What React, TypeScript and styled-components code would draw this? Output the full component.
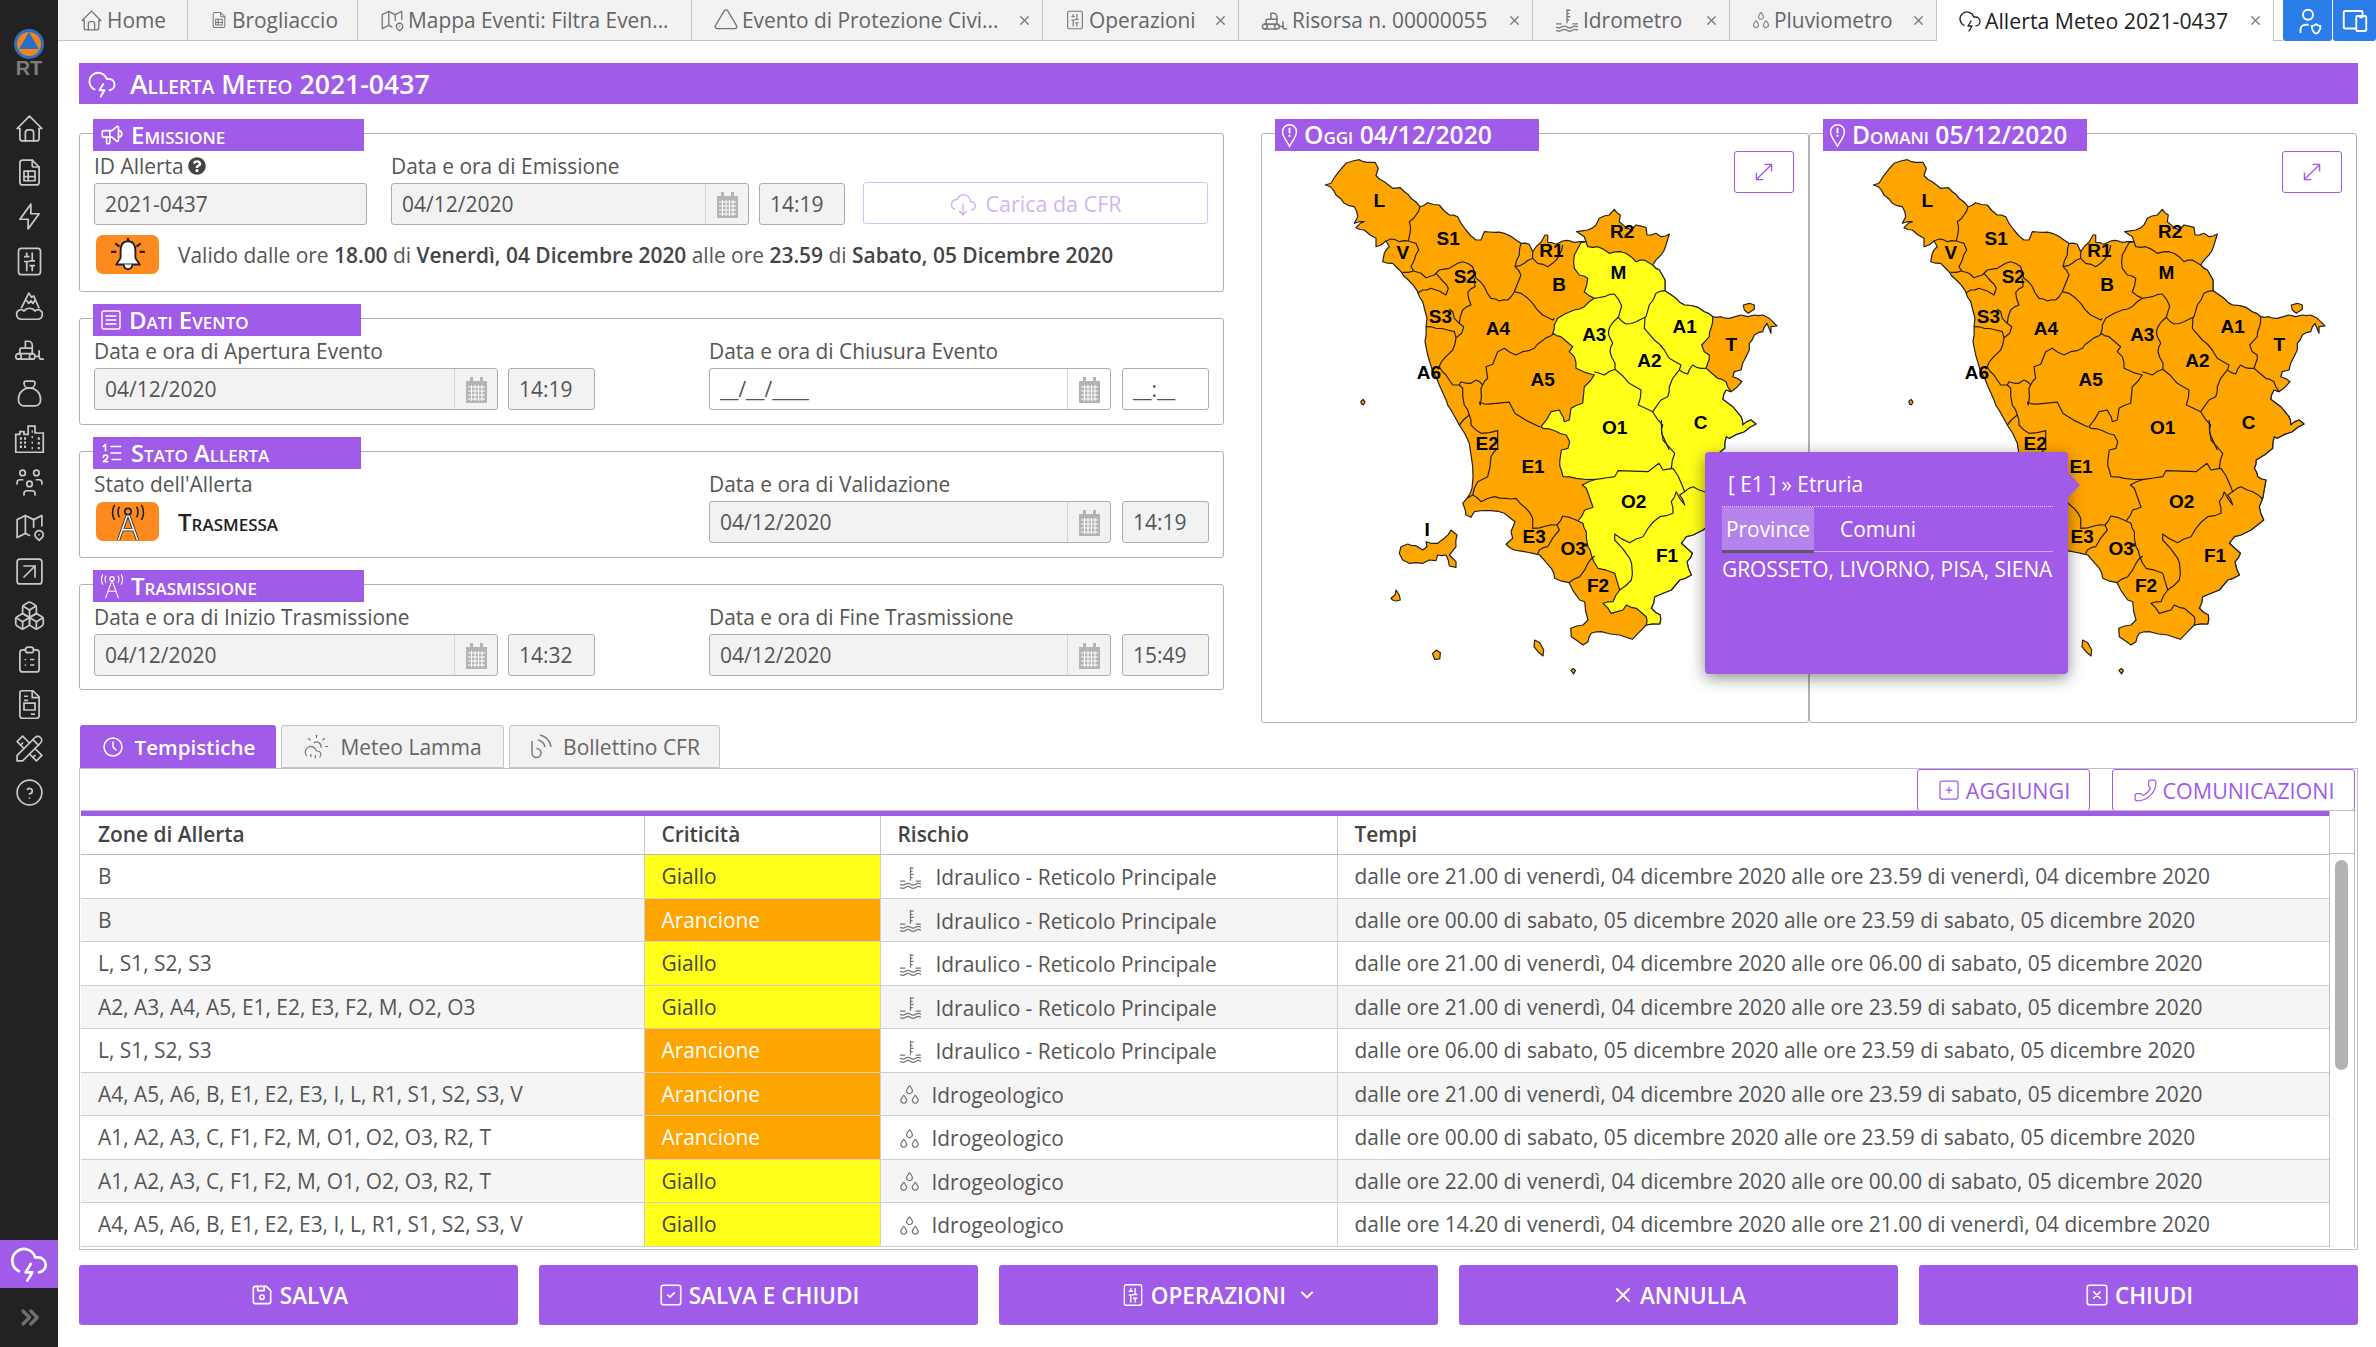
import React from 'react';
import styled, { createGlobalStyle } from 'styled-components';
import {
  TbHome, TbFileSpreadsheet, TbBolt, TbBulldozer, TbMoneybag, TbUsersGroup, TbMap2,
  TbClipboardList, TbTools, TbHelpCircle, TbChevronsRight, TbTriangle, TbDroplets,
  TbUserShield, TbDevices, TbSpeakerphone, TbListNumbers, TbClock, TbSquarePlus,
  TbDeviceFloppy, TbSquareCheck, TbChevronDown, TbX, TbSquareX, TbCloudDownload,
} from 'react-icons/tb';
import { FaQuestionCircle } from 'react-icons/fa';
import { CloudLightning, MoveDiagonal, CloudSunRain, SquareMenu, SquareArrowUpRight, Boxes, Phone } from 'lucide-react';

const PURPLE = '#a05ce8';
const FONT = '"Open Sans", "Noto Sans", sans-serif';

const Global = createGlobalStyle`
  html, body { margin: 0; padding: 0; background: #fff; }
  body { font-family: ${FONT}; font-size: 21px; color: #444; }
  * { box-sizing: border-box; }
`;

/* ---------------- map geometry (traced, in page pixel units) ---------------- */
type Pt = [number, number];
const conv = (ox: number, oy: number, k: number) => (s: string): Pt[] =>
  s.trim().split(/\s+/).map((p) => {
    const [x, y] = p.split(',').map(Number);
    return [ox + x / k, oy + y / k] as Pt;
  });
const A = conv(1320, 155, 3);
const B = conv(1540, 200, 3);
const C = conv(1390, 400, 3);
const D = conv(1532, 420, 3);
const Z = conv(1250, 140, 2.613);

const rough = (pts: Pt[]): string => {
  const out: string[] = [];
  pts.forEach((p, i) => {
    out.push(`${p[0].toFixed(1)},${p[1].toFixed(1)}`);
    const n = pts[i + 1];
    if (!n) return;
    const dx = n[0] - p[0];
    const dy = n[1] - p[1];
    const len = Math.hypot(dx, dy);
    if (len < 8) return;
    const h = Math.abs(Math.round((p[0] + n[0]) * 7 + (p[1] + n[1]) * 13)) % 3;
    const off = (h - 1) * 0.7;
    const mx = (p[0] + n[0]) / 2 - (dy / len) * off;
    const my = (p[1] + n[1]) / 2 + (dx / len) * off;
    out.push(`${mx.toFixed(1)},${my.toFixed(1)}`);
  });
  return out.join(' ');
};

const coastEast = '580,50 575,85 525,120 520,145 530,170 555,180 545,235 535,260 548,300 510,330 480,345 460,350 445,370 478,400 462,425 475,465 440,480 415,510 365,530 355,565 382,585 380,612 340,615';
const eastTail = '355,210 372,240 372,272 405,295 430,315 470,322 490,335 515,350';
const seCoastB = '570,575 555,570 545,598 575,620 600,650 605,675 630,660 645,672 610,695 565,715';

const LAND: Pt[] = [
  ...A('13,90 30,85 42,65 60,42 75,25 95,18 115,14 140,22 162,22 172,40 165,62 190,80 215,100 238,98 252,112 270,130 297,155 320,143 355,150 385,180 410,185 435,225 465,255 480,255 490,230 520,232 550,235 585,255 600,265 625,268 635,290 660,262 672,240 680,240 680,262 705,268 725,258 750,258'),
  ...B(`90,125 115,125 135,125 130,110 107,95 140,90 165,75 175,55 205,45 220,28 238,45 235,65 270,90 285,75 315,82 318,105 345,100 360,110 385,102 375,135 360,165 335,195 ${eastTail} 540,350 565,355 600,345 620,350 640,345 665,345 685,355 708,378 690,380 690,400 678,370 665,395 640,405 625,430 625,450 605,490 600,510 580,515 575,530 603,545 ${seCoastB}`),
  ...D(`${coastEast} 298,658 260,645 205,635 175,640 165,665 150,675 115,650 113,625 150,615 165,600 155,545 140,540 108,488 65,475 55,445 20,405 0,400`),
  ...C('400,455 370,450 345,433 365,415 360,395 372,365 340,340 300,332 250,335 240,352 225,345 215,310 228,295 243,265 245,200 235,130 205,75 180,30 165,0'),
  ...A('355,690 335,650 320,600 312,560 315,515 318,490 305,440 290,410 262,375 240,350 215,325 185,320 190,295 205,275 195,258 180,270 165,275 165,250 130,225 105,218 118,205 130,200 115,200 100,205 110,185 100,155 70,145 45,120 28,95'),
];

const YELLOW: Pt[] = [
  ...B(`120,128 135,125 140,140 170,140 205,160 240,155 270,170 285,185 310,180 335,195 ${eastTail} 510,385 505,410 482,435 490,455 505,465 500,490 495,505 530,535 555,545 ${seCoastB}`),
  ...D(`${coastEast} 340,590 310,565 280,555 270,570 235,580 210,550 240,545 260,510 245,460 195,445 175,405 165,380 160,335 150,310 135,303 155,270 180,262 160,205 148,195 190,178 130,175 90,170 85,150 80,125 85,90 105,85 110,65 100,45 65,32 30,25`),
  ...C('450,80 480,35 505,30'),
  ...B('60,640 70,665 85,660 90,625 125,610 130,560 160,525 105,505 100,470 85,455 95,440 60,410 35,400 40,375 50,355 100,330 130,320 160,295 130,275 140,235 115,225 100,205 100,165'),
];

const ISLANDS: Pt[][] = [
  C('30,440 50,432 75,437 95,450 108,440 105,425 120,430 140,430 160,415 180,390 198,405 195,440 175,465 195,485 195,502 175,498 165,465 140,465 135,482 115,480 95,490 55,490 35,480 25,460'),
  B('607,315 625,310 640,315 640,328 622,340 610,330'),
  C('0,595 12,585 15,570 25,585 28,600 15,603 5,600'),
  D('5,660 20,668 32,690 30,708 15,695 3,680'),
  Z('287,683 293,678 298,684 294,692 289,690'),
  Z('474,1342 484,1333 495,1340 493,1356 480,1357'),
  Z('836,1386 842,1381 848,1386 843,1395'),
];

const LINES: Pt[][] = [
  A('297,155 285,180 265,200 268,230 262,258'),
  A('195,258 210,252 235,260 262,258 285,265 293,285 280,315 270,335 278,348 262,352 245,352'),
  A('278,348 300,355 315,368 340,360 355,345 385,340 410,325 425,320 455,335 465,370 490,395 510,430 535,438 560,435 580,410 600,360 582,335 595,300 600,265'),
  A('345,355 365,378 382,400 375,420 355,408 330,400 305,405 290,415'),
  A('460,370 462,395 440,412 450,450 425,465 415,505 428,515 422,535 405,548 400,530 380,525 345,520 315,515'),
  A('385,462 395,470 400,490 415,505'),
  A('405,548 395,585 370,610 355,635 375,660 395,690 415,690 420,680 450,685 465,675 485,690 500,670 495,635 515,628 530,590 550,580 585,600 605,590 640,580 660,560 690,542 700,535'),
  A('355,635 340,640'),
  A('580,410 600,415 635,445 665,480 695,495 700,490'),
  A('582,335 610,325 635,310 650,325 680,335 695,325 715,300 725,270'),
  A('635,290 635,310'),
  [...A('415,690 425,700 430,750'), ...C('235,45')],
  [...A('485,690 480,700 478,750'), ...Z('597,685 620,690 675,685 690,715 755,750')],
  C('205,75 235,45 240,75 270,100 320,92 320,145 300,170 290,230 260,245 245,285 228,295'),
  C('245,285 270,305 310,290 345,295 375,295 405,325 425,355 425,385 465,378 498,375 505,390 470,440 445,450 440,462'),
  C('498,375 515,348 560,362'),
  D('108,488 140,470 165,430 185,408'),
  B('160,295 190,290 220,282 242,318 232,352 255,372 285,365 315,350 325,315 345,280 372,272'),
  B('232,352 207,380 203,405 215,430 207,455 222,490 222,508 190,525 160,515'),
  B('222,508 265,550 300,570 292,615 335,635 365,675 362,700 385,750'),
  B('312,352 310,385 340,420 370,450 385,475 420,495 415,510 395,535 385,560 380,590 360,600 335,635'),
  B('415,510 440,522 455,495 480,505 495,505'),
  D('385,0 390,60 425,100 415,145'),
  D('190,178 245,170 255,152 345,155 378,130 390,150 420,145 445,190 455,215 480,200 515,215 545,238'),
  D('430,215 415,245 420,280 380,290 345,325 330,350 290,368 245,342 245,360 290,415 297,445 295,480 260,510'),
  D('430,215 455,255 440,225 455,215'),
];

const LABELS: [string, number, number][] = ([
  ['L', 335, 158], ['S1', 515, 258], ['V', 397, 295], ['S2', 560, 357], ['R1', 785, 288], ['R2', 970, 238],
  ['M', 960, 345], ['B', 805, 378], ['S3', 495, 462], ['A3', 897, 507], ['A4', 645, 493], ['A1', 1133, 488],
  ['T', 1255, 535], ['A2', 1041, 575], ['A6', 465, 608], ['A5', 762, 625], ['C', 1175, 738], ['O1', 950, 752],
  ['E2', 617, 792], ['E1', 737, 852], ['O2', 1000, 945], ['E3', 740, 1035], ['O3', 842, 1068], ['F1', 1087, 1085],
  ['F2', 907, 1165], ['I', 460, 1017],
] as [string, number, number][]).map(([t, x, y]) => [t, 1250 + x / 2.613, 140 + y / 2.613]);

const MapSvg = styled.svg`
  display: block;
  width: 480px;
  height: 540px;
  margin: 8px 0 0 35px;
`;
const MapLabel = styled.text`
  font-family: "Liberation Sans", Arial, sans-serif;
  font-weight: 700;
  font-size: 19px;
  fill: #000;
  text-anchor: middle;
  dominant-baseline: central;
`;

const TuscanyMap = ({ inland }: { inland: string }) => (
  <MapSvg viewBox="1310 150 480 540">
    <g stroke="#222" strokeWidth="1.2" strokeLinejoin="round" fill="#ffa500">
      <polygon points={rough([...LAND, LAND[0]])} />
      {ISLANDS.map((p, i) => <polygon key={i} points={rough(p)} />)}
      <polygon points={rough(YELLOW)} fill={inland} />
      {LINES.map((p, i) => <polyline key={i} points={rough(p)} fill="none" />)}
      <circle cx={1585} cy={545} r={1.2} fill="#222" />
    </g>
    {LABELS.map(([t, x, y]) => <MapLabel key={t} x={x} y={y}>{t}</MapLabel>)}
  </MapSvg>
);

/* ---------------- hand drawn icons ---------------- */
const CalendarIcon = () => (
  <svg width="21" height="27" viewBox="0 0 21 27">
    <path d="M0 5h4V1h3v4h7V1h3v4h4v22H0z" fill="#b4b4b4" />
    <path d="M2 11h17M2 15h17M2 19h17M2 23h17M5.500 9v16M9 9v16M12.500 9v16M16 9v16" stroke="#fff" strokeWidth="1" fill="none" />
  </svg>
);
const SliderBox = ({ size = 26, color = '#777' }: { size?: number; color?: string }) => (
  <svg width={size} height={size} viewBox="0 0 24 24" fill="none" stroke={color} strokeWidth="1.25">
    <rect x="4" y="2.500" width="16" height="19" rx="2" />
    <path d="M10 5.500v3M10 12v7M14 5.500v6M14 15v4M8 8.500h4M12 11.500h4M8 12h4M12 15h4" />
  </svg>
);
type GlyphProps = { size?: number; strokeWidth?: number };
const MountainCloud = ({ size = 33, strokeWidth = 1.25 }: GlyphProps) => (
  <svg width={size} height={size} viewBox="0 0 24 24" fill="none" stroke="currentColor" strokeWidth={strokeWidth} strokeLinejoin="round">
    <path d="M6 14L11.500 3l2 3 1.500-1 4 9" />
    <path d="M9.500 8l2 2.500 1.500-2 1.500 2 1.500-2.500" />
    <path d="M6 22a3.500 3.500 0 0 1-1-6.800c1.300-.4 2.300.1 3 .9 1-1.500 2.400-2.100 4-2.100s3 .6 4 2.100c.7-.8 1.700-1.300 3-.9a3.500 3.500 0 0 1-1 6.800z" />
  </svg>
);
const Buildings = ({ size = 33, strokeWidth = 1.25 }: GlyphProps) => (
  <svg width={size} height={size} viewBox="0 0 24 24" fill="none" stroke="currentColor" strokeWidth={strokeWidth}>
    <path d="M2 22V9h3V7h3v2h3V3h5v5h6v14z" />
    <path d="M5 12h1.500M8 12h1.500M5 15h1.500M8 15h1.500M5 18h1.500M8 18h1.500M13.500 7h1M13.500 11h1M13.500 15h1M13.500 19h1M18 12h1.500M18 15.500h1.500M18 19h1.500" strokeWidth={1.8} />
  </svg>
);
const ReportDoc = ({ size = 33, strokeWidth = 1.25 }: GlyphProps) => (
  <svg width={size} height={size} viewBox="0 0 24 24" fill="none" stroke="currentColor" strokeWidth={strokeWidth}>
    <path d="M6.500 2h8l4.500 4.500V20a2 2 0 0 1-2 2H7a2 2 0 0 1-2-2V3.500A1.500 1.500 0 0 1 6.500 2z" />
    <path d="M14 2v5h5M8 6h3M8 9h3M8 11h8v5H8zM13 19h3" />
  </svg>
);
const Hydro = ({ size = 26, color = '#777' }: { size?: number; color?: string }) => (
  <svg width={size} height={size} viewBox="0 0 24 24" fill="none" stroke={color} strokeWidth="1.2">
    <path d="M12 2v13M12 3h3M12 6h2M12 9h3M12 12h2" />
    <path d="M2 15.500h5M17 15.500h5M2 18.500c2 1.400 3 1.400 5 0s3-1.400 5 0 3 1.400 5 0 3-1.400 5 0M2 21.500c2 1.400 3 1.400 5 0s3-1.400 5 0 3 1.400 5 0 3-1.400 5 0" />
  </svg>
);
const Bell = () => (
  <svg width="48" height="38" viewBox="0 0 44 36">
    <path d="M22 5c-5 0-7 4-7 9v6c0 3-3 4-4 7h22c-1-3-4-4-4-7v-6c0-5-2-9-7-9z" fill="#fff" stroke="#222" strokeWidth="1.8" />
    <path d="M18 27c0 6 8 6 8 0" fill="#fff" stroke="#222" strokeWidth="1.8" />
    <path d="M22 2v3M10 7l4 3M34 7l-4 3M6 15h5M33 15h5" stroke="#222" strokeWidth="2" fill="none" />
  </svg>
);
const Mast = ({ size = 40, color = '#fff', outline = true }: { size?: number; color?: string; outline?: boolean }) => (
  <svg width={size} height={size} viewBox="0 0 40 40" fill="none">
    {outline && <path d="M20 11L10 39M20 11l10 28M14 28h12M20 11l-6 17M20 11l6 17" stroke="#222" strokeWidth="3.400" />}
    <path d="M20 11L10 39M20 11l10 28M14 28h12" stroke={color} strokeWidth="1.700" />
    <circle cx="20" cy="9" r="3.400" stroke={outline ? '#222' : color} strokeWidth="1.700" />
    <path d="M11 4c-2 3-2 8 0 11M29 4c2 3 2 8 0 11M6 2c-3 5-3 12 0 16M34 2c3 5 3 12 0 16" stroke={outline ? '#222' : color} strokeWidth="1.700" />
  </svg>
);
const Pin = () => (
  <svg width="17" height="27" viewBox="0 0 22 32" fill="none" stroke="#fff" strokeWidth="1.800">
    <path d="M11 30C6 21 2 17 2 11a9 9 0 0 1 18 0c0 6-4 10-9 19z" />
    <path d="M11 6v7M11 15v2.500" strokeWidth="2.400" />
  </svg>
);
const Signal = () => (
  <svg width="24" height="28" viewBox="0 0 24 28" fill="none" stroke="#777" strokeWidth="1.400">
    <path d="M3 8v12a4.500 4.500 0 1 0 4.500-4.500" />
    <path d="M9 7a9 9 0 0 1 7 7M11 2a14 14 0 0 1 11 12" />
  </svg>
);
const Logo = () => (
  <svg width="32" height="34" viewBox="0 0 32 34">
    <circle cx="16" cy="17" r="15" fill="#2a6fc4" />
    <circle cx="16" cy="17" r="12" fill="#f08420" />
    <path d="M16 5l10 17H6z" fill="#2a6fc4" />
  </svg>
);

/* ---------------- shell ---------------- */
const Page = styled.div`
  display: flex;
  width: 2376px;
  height: 1347px;
  overflow: hidden;
`;
const Side = styled.nav`
  flex: 0 0 58px;
  background: #222;
  display: flex;
  flex-direction: column;
  align-items: center;
  color: #c8c8c8;
`;
const LogoBox = styled.div`
  height: 106px;
  padding-top: 27px;
  display: flex;
  flex-direction: column;
  align-items: center;
`;
const LogoText = styled.span`
  font-family: "Liberation Sans", sans-serif;
  font-weight: 700;
  font-size: 20px;
  line-height: 15px;
  color: #7d7d7d;
`;
const SideItem = styled.div`
  height: 44.300px;
  display: flex;
  align-items: center;
  justify-content: center;
`;
const SideActive = styled.div`
  margin-top: auto;
  margin-bottom: 59px;
  width: 100%;
  height: 48px;
  background: ${PURPLE};
  color: #fff;
  display: flex;
  align-items: center;
  justify-content: center;
  position: relative;
`;
const SideMore = styled.div`
  position: absolute;
  top: 62px;
  left: 0;
  width: 100%;
  display: flex;
  justify-content: center;
  color: #6f6f6f;
`;
const Main = styled.main`
  flex: 1;
  min-width: 0;
  display: flex;
  flex-direction: column;
`;
const TabBar = styled.div`
  height: 41px;
  display: flex;
  align-items: stretch;
`;
const Tab = styled.div<{ $w: number; $active?: boolean }>`
  flex: 0 0 ${(p) => p.$w}px;
  display: flex;
  align-items: center;
  padding: 0 10px 0 21px;
  gap: 3px;
  font-size: ${(p) => (p.$active ? 21.3 : 20.9)}px;
  font-weight: ${(p) => (p.$active ? 500 : 400)};
  white-space: nowrap;
  background: ${(p) => (p.$active ? '#fff' : '#f2f2f2')};
  color: ${(p) => (p.$active ? '#222' : '#666')};
  border-right: 1px solid #c4c4c4;
  border-bottom: ${(p) => (p.$active ? 'none' : '1.500px solid #c4c4c4')};
`;
const TabClose = styled.span`
  margin-left: auto;
  display: flex;
  color: #777;
`;
const TabFill = styled.div`
  flex: 0 0 9px;
  border-bottom: 1.500px solid #c4c4c4;
`;
const BlueBtn = styled.div<{ $w: number }>`
  flex: 0 0 ${(p) => p.$w}px;
  background: #2b7de9;
  color: #fff;
  display: flex;
  align-items: center;
  justify-content: center;
  border-radius: 0 0 3px 3px;
  & + & { margin-left: 1px; }
`;
const Content = styled.div`
  flex: 1;
  min-height: 0;
  display: flex;
  flex-direction: column;
  padding: 22px 18px 0 21px;
`;
const TitleBar = styled.h1`
  margin: 0;
  height: 41px;
  background: ${PURPLE};
  color: #fff;
  display: flex;
  align-items: center;
  gap: 13px;
  padding-left: 8px;
  font-size: 26.600px;
  font-weight: 600;
  font-variant: small-caps;
`;
const Upper = styled.div`
  margin-top: 15px;
  display: grid;
  grid-template-columns: 1145px 1fr;
  column-gap: 37px;
  height: 572px;
`;
const LeftCol = styled.div`
  display: flex;
  flex-direction: column;
  gap: 12px;
`;
const RightCol = styled.div`
  display: grid;
  grid-template-columns: 548px 548px;
  position: relative;
  height: 604px;
`;
const Box = styled.fieldset<{ $h: number }>`
  margin: -2px 0 0;
  padding: 0 14px;
  min-width: 0;
  height: ${(p) => p.$h + 2}px;
  border: 1.500px solid #b2b2b2;
  border-radius: 3px;
  position: relative;
`;
const Legend = styled.legend<{ $w: number; $fs?: number }>`
  float: none;
  position: relative;
  top: 2px;
  width: ${(p) => p.$w}px;
  height: 32px;
  margin: 0 0 -7px -1px;
  padding: 0 0 0 6px;
  background: ${PURPLE};
  color: #fff;
  display: flex;
  align-items: center;
  gap: 6px;
  font-size: ${(p) => p.$fs ?? 24}px;
  font-weight: 600;
  font-variant: small-caps;
  line-height: 32px;
  white-space: nowrap;
`;
const Label = styled.label`
  display: flex;
  align-items: center;
  gap: 4px;
  height: 32px;
  margin: 8px 0 1px;
  font-size: 20.900px;
  color: #555;
  white-space: nowrap;
`;
const Row = styled.div`
  display: flex;
  align-items: flex-end;
`;
const Cols = styled.div`
  display: grid;
  grid-template-columns: 615px 1fr;
`;
const Inline = styled.div<{ $gap?: number }>`
  display: flex;
  gap: ${(p) => p.$gap ?? 10}px;
`;
const Field = styled.div<{ $ml?: number }>`
  display: flex;
  flex-direction: column;
  margin-left: ${(p) => p.$ml ?? 0}px;
`;
const Input = styled.div<{ $w: number; $empty?: boolean }>`
  width: ${(p) => p.$w}px;
  height: 42px;
  display: flex;
  align-items: center;
  padding-left: 10px;
  background: ${(p) => (p.$empty ? '#fff' : '#f2f2f2')};
  border: 1.500px solid #aeaeae;
  border-radius: 3px;
  font-size: 21px;
  color: #555;
  white-space: nowrap;
`;
const Addon = styled.span`
  margin-left: auto;
  width: 43px;
  height: 100%;
  display: flex;
  align-items: center;
  justify-content: center;
  border-left: 1px solid #d4d4d4;
`;
const LoadBtn = styled.div`
  width: 345px;
  height: 42px;
  margin: 0 0 1px 18px;
  border: 1.500px solid #d9bff6;
  border-radius: 3px;
  color: #d3b4f6;
  display: flex;
  align-items: center;
  justify-content: center;
  gap: 8px;
  font-size: 21.500px;
  font-weight: 500;
`;
const StatusRow = styled.div<{ $mt: number }>`
  display: flex;
  align-items: center;
  gap: 19px;
  margin-top: ${(p) => p.$mt}px;
  margin-left: 2px;
`;
const StatusIcon = styled.div`
  width: 63px;
  height: 39px;
  background: #fd8a1f;
  border-radius: 7px;
  display: flex;
  align-items: center;
  justify-content: center;
  overflow: hidden;
`;
const Note = styled.div`
  font-size: 20.930px;
  color: #555;
  white-space: nowrap;
  b { font-weight: 600; color: #444; }
`;
const StateName = styled.span`
  font-size: 24px;
  font-weight: 600;
  font-variant: small-caps;
  color: #222;
`;
const ExpandBtn = styled.button<{ $r: number }>`
  position: absolute;
  top: 9px;
  right: ${(p) => p.$r}px;
  width: 60px;
  height: 42px;
  padding: 0;
  background: #fff;
  border: 1.500px solid ${PURPLE};
  border-radius: 3px;
  color: ${PURPLE};
  display: flex;
  align-items: center;
  justify-content: center;
`;
const Tooltip = styled.div`
  position: absolute;
  left: 444px;
  top: 333px;
  width: 363px;
  height: 222px;
  padding: 15px 15px 0 17px;
  background: ${PURPLE};
  border-radius: 4px;
  color: #fff;
  font-size: 20.900px;
  box-shadow: 0 4px 16px rgba(0, 0, 0, 0.45);
  &::after {
    content: '';
    position: absolute;
    right: -12px;
    top: 19px;
    border-style: solid;
    border-width: 14px 0 14px 13px;
    border-color: transparent transparent transparent ${PURPLE};
  }
`;
const TipTitle = styled.div`
  height: 40px;
  line-height: 34px;
  padding-left: 6px;
  border-bottom: 1.500px dotted #e3cffa;
`;
const TipTabs = styled.div`
  display: flex;
  height: 45px;
  border-bottom: 1px solid #cba6f2;
`;
const TipTab = styled.div<{ $on?: boolean }>`
  padding: 0 ${(p) => (p.$on ? 4 : 26)}px;
  width: ${(p) => (p.$on ? '92px' : 'auto')};
  line-height: 44px;
  background: ${(p) => (p.$on ? '#b484ec' : 'transparent')};
  border-bottom: ${(p) => (p.$on ? '3px solid #5f5670' : 'none')};
  height: ${(p) => (p.$on ? '46px' : '44px')};
`;
const TipBody = styled.div`
  margin-top: 1px;
  line-height: 32px;
  white-space: nowrap;
`;
const TabsRow = styled.div`
  margin-top: 34px;
  display: flex;
  gap: 5px;
  padding-left: 1px;
  height: 43px;
`;
const PanelTab = styled.div<{ $w: number; $on?: boolean }>`
  flex: 0 0 ${(p) => p.$w}px;
  display: flex;
  align-items: center;
  justify-content: center;
  gap: 10px;
  border: 1.500px solid ${(p) => (p.$on ? PURPLE : '#c4c4c4')};
  border-bottom: ${(p) => (p.$on ? 'none' : '1.500px solid #c4c4c4')};
  border-radius: 3px 3px 0 0;
  background: ${(p) => (p.$on ? PURPLE : '#f2f2f2')};
  color: ${(p) => (p.$on ? '#fff' : '#666')};
  font-size: ${(p) => (p.$on ? 20.600 : 21)}px;
  font-weight: ${(p) => (p.$on ? 600 : 400)};
`;
const Panel = styled.section`
  height: 482px;
  border: 1.500px solid #c0c0c0;
  padding: 0 1px 2px;
  display: flex;
  flex-direction: column;
  overflow: hidden;
`;
const Toolbar = styled.div`
  height: 41px;
  flex: none;
  display: flex;
  justify-content: flex-end;
  gap: 22px;
  padding-right: 1px;
`;
const OutlineBtn = styled.div<{ $w: number }>`
  width: ${(p) => p.$w}px;
  height: 42px;
  border: 1.500px solid ${PURPLE};
  border-radius: 3px;
  color: ${PURPLE};
  display: flex;
  align-items: center;
  justify-content: center;
  gap: 5px;
  font-size: 21.500px;
  font-weight: 500;
  background: #fff;
`;
const Mirror = styled.span`
  display: flex;
  transform: scaleX(-1);
`;
const TableArea = styled.div`
  flex: 1;
  min-height: 0;
  display: flex;
  border-top: 1.500px solid #c0c0c0;
  overflow: hidden;
`;
const TableClip = styled.div`
  flex: 0 0 2248px;
  overflow: hidden;
`;
const Table = styled.table`
  width: 2248px;
  table-layout: fixed;
  border-collapse: collapse;
  font-size: 20.900px;
  color: #555;
`;
const Th = styled.th<{ $w: number }>`
  width: ${(p) => p.$w}px;
  height: 41px;
  padding: 0 17px 3px;
  text-align: left;
  font-weight: 600;
  font-size: 20.900px;
  color: #444;
  border-top: 5px solid ${PURPLE};
  border-right: 1.500px solid #c8c8c8;
  border-bottom: 1.500px solid #bdbdbd;
  &:last-child { border-right: none; }
`;
const Tr = styled.tr<{ $alt: boolean }>`
  height: 43.500px;
  background: ${(p) => (p.$alt ? '#f5f5f5' : '#fff')};
`;
const Td = styled.td`
  padding: 0 17px;
  white-space: nowrap;
  border-right: 1.500px solid #d0d0d0;
  border-bottom: 1px solid #cfcfcf;
  &:last-child { border-right: none; }
`;
const LevelCell = styled(Td)<{ $level: string }>`
  background: ${(p) => (p.$level === 'Giallo' ? '#ffff1a' : '#ffa500')};
  color: ${(p) => (p.$level === 'Giallo' ? '#444' : '#fff')};
`;
const RiskWrap = styled.span<{ $gap: number }>`
  display: flex;
  align-items: center;
  gap: ${(p) => p.$gap}px;
  position: relative;
  top: 1px;
`;
const ScrollCol = styled.div`
  flex: 0 0 26px;
  border-left: 1.500px solid #c0c0c0;
  border-right: 1.500px solid #c0c0c0;
`;
const ScrollHead = styled.div`
  height: 43px;
  border-bottom: 1.500px solid #c0c0c0;
`;
const ScrollThumb = styled.div`
  margin: 6px 0 0 5px;
  width: 13px;
  height: 210px;
  background: #b2b2b2;
  border-radius: 7px;
`;
const Actions = styled.div`
  margin-top: 15px;
  height: 60px;
  flex: none;
  display: grid;
  grid-template-columns: repeat(5, 1fr);
  column-gap: 21px;
`;
const ActionBtn = styled.button`
  border: none;
  border-radius: 3px;
  background: ${PURPLE};
  color: #fff;
  font-family: ${FONT};
  font-size: 22.500px;
  font-weight: 600;
  display: flex;
  align-items: center;
  justify-content: center;
  gap: 5px;
  padding: 0;
`;
const Caret = styled.span`
  display: flex;
  margin-left: 6px;
`;

const sideIcons = [
  TbHome, TbFileSpreadsheet, TbBolt, null, MountainCloud, TbBulldozer, TbMoneybag, Buildings,
  TbUsersGroup, TbMap2, SquareArrowUpRight, Boxes, TbClipboardList, ReportDoc, TbTools, TbHelpCircle,
] as (React.ComponentType<any> | null)[];

const ICON = { strokeWidth: 1.25 } as const;

const rows: [string, string, boolean, string][] = [
  ['B', 'Giallo', true, 'dalle ore 21.00 di venerdì, 04 dicembre 2020 alle ore 23.59 di venerdì, 04 dicembre 2020'],
  ['B', 'Arancione', true, 'dalle ore 00.00 di sabato, 05 dicembre 2020 alle ore 23.59 di sabato, 05 dicembre 2020'],
  ['L, S1, S2, S3', 'Giallo', true, 'dalle ore 21.00 di venerdì, 04 dicembre 2020 alle ore 06.00 di sabato, 05 dicembre 2020'],
  ['A2, A3, A4, A5, E1, E2, E3, F2, M, O2, O3', 'Giallo', true, 'dalle ore 21.00 di venerdì, 04 dicembre 2020 alle ore 23.59 di sabato, 05 dicembre 2020'],
  ['L, S1, S2, S3', 'Arancione', true, 'dalle ore 06.00 di sabato, 05 dicembre 2020 alle ore 23.59 di sabato, 05 dicembre 2020'],
  ['A4, A5, A6, B, E1, E2, E3, I, L, R1, S1, S2, S3, V', 'Arancione', false, 'dalle ore 21.00 di venerdì, 04 dicembre 2020 alle ore 23.59 di sabato, 05 dicembre 2020'],
  ['A1, A2, A3, C, F1, F2, M, O1, O2, O3, R2, T', 'Arancione', false, 'dalle ore 00.00 di sabato, 05 dicembre 2020 alle ore 23.59 di sabato, 05 dicembre 2020'],
  ['A1, A2, A3, C, F1, F2, M, O1, O2, O3, R2, T', 'Giallo', false, 'dalle ore 22.00 di venerdì, 04 dicembre 2020 alle ore 00.00 di sabato, 05 dicembre 2020'],
  ['A4, A5, A6, B, E1, E2, E3, I, L, R1, S1, S2, S3, V', 'Giallo', false, 'dalle ore 14.20 di venerdì, 04 dicembre 2020 alle ore 21.00 di venerdì, 04 dicembre 2020'],
];

const DateField = ({ w, value, empty }: { w: number; value: string; empty?: boolean }) => (
  <Input $w={w} $empty={empty}>
    {value}
    <Addon><CalendarIcon /></Addon>
  </Input>
);

const tabs: [number, React.ReactNode, string, boolean][] = [
  [130, <TbHome size={25} color="#777" {...ICON} />, 'Home', false],
  [170, <TbFileSpreadsheet size={20} color="#777" {...ICON} />, 'Brogliaccio', false],
  [334, <TbMap2 size={26} color="#777" {...ICON} />, 'Mappa Eventi: Filtra Even...', false],
  [351, <TbTriangle size={26} color="#777" {...ICON} />, 'Evento di Protezione Civi...', true],
  [196, <SliderBox size={22} />, 'Operazioni', true],
  [294, <TbBulldozer size={29} color="#777" {...ICON} />, 'Risorsa n. 00000055', true],
  [197, <Hydro />, 'Idrometro', true],
  [207, <TbDroplets size={20} color="#777" {...ICON} />, 'Pluviometro', true],
];

export default function App() {
  return (
    <>
      <Global />
      <Page>
        <Side>
          <LogoBox>
            <Logo />
            <LogoText>RT</LogoText>
          </LogoBox>
          {sideIcons.map((I, i) => (
            <SideItem key={i}>
              {I ? <I size={33} strokeWidth={1.25} /> : <SliderBox size={33} color="#c8c8c8" />}
            </SideItem>
          ))}
          <SideActive>
            <CloudLightning size={40} strokeWidth={1.6} />
            <SideMore><TbChevronsRight size={31} strokeWidth={2.6} /></SideMore>
          </SideActive>
        </Side>
        <Main>
          <TabBar>
            {tabs.map(([w, icon, text, close]) => (
              <Tab key={text} $w={w}>
                {icon}
                {text}
                {close && <TabClose><TbX size={15} /></TabClose>}
              </Tab>
            ))}
            <Tab $w={337} $active>
              <CloudLightning size={24} strokeWidth={1.3} />
              Allerta Meteo 2021-0437
              <TabClose><TbX size={15} /></TabClose>
            </Tab>
            <TabFill />
            <BlueBtn $w={49}><TbUserShield size={30} strokeWidth={1.5} /></BlueBtn>
            <BlueBtn $w={43}><TbDevices size={30} strokeWidth={1.5} /></BlueBtn>
          </TabBar>
          <Content>
            <TitleBar><CloudLightning size={30} strokeWidth={1.5} />Allerta Meteo 2021-0437</TitleBar>
            <Upper>
              <LeftCol>
                <Box $h={173}>
                  <Legend $w={271}><TbSpeakerphone size={26} strokeWidth={1.5} />Emissione</Legend>
                  <Row>
                    <Field>
                      <Label>ID Allerta <FaQuestionCircle size={18} color="#444" /></Label>
                      <Input $w={273}>2021-0437</Input>
                    </Field>
                    <Field $ml={24}>
                      <Label>Data e ora di Emissione</Label>
                      <Inline>
                        <DateField w={358} value="04/12/2020" />
                        <Input $w={86}>14:19</Input>
                      </Inline>
                    </Field>
                    <LoadBtn><TbCloudDownload size={28} strokeWidth={1.25} />Carica da CFR</LoadBtn>
                  </Row>
                  <StatusRow $mt={10}>
                    <StatusIcon><Bell /></StatusIcon>
                    <Note>Valido dalle ore <b>18.00</b> di <b>Venerdì, 04 Dicembre 2020</b> alle ore <b>23.59</b> di <b>Sabato, 05 Dicembre 2020</b></Note>
                  </StatusRow>
                </Box>
                <Box $h={121}>
                  <Legend $w={268}><SquareMenu size={24} strokeWidth={1.4} />Dati Evento</Legend>
                  <Cols>
                    <Field>
                      <Label>Data e ora di Apertura Evento</Label>
                      <Inline><DateField w={404} value="04/12/2020" /><Input $w={87}>14:19</Input></Inline>
                    </Field>
                    <Field>
                      <Label>Data e ora di Chiusura Evento</Label>
                      <Inline $gap={11}><DateField w={402} value="__/__/____" empty /><Input $w={87} $empty>__:__</Input></Inline>
                    </Field>
                  </Cols>
                </Box>
                <Box $h={121}>
                  <Legend $w={268} $fs={23.7}><TbListNumbers size={26} strokeWidth={1.5} />Stato Allerta</Legend>
                  <Cols>
                    <Field>
                      <Label>Stato dell'Allerta</Label>
                      <StatusRow $mt={1}>
                        <StatusIcon><Mast size={38} /></StatusIcon>
                        <StateName>Trasmessa</StateName>
                      </StatusRow>
                    </Field>
                    <Field>
                      <Label>Data e ora di Validazione</Label>
                      <Inline $gap={11}><DateField w={402} value="04/12/2020" /><Input $w={87}>14:19</Input></Inline>
                    </Field>
                  </Cols>
                </Box>
                <Box $h={120}>
                  <Legend $w={271}><Mast size={26} outline={false} />Trasmissione</Legend>
                  <Cols>
                    <Field>
                      <Label>Data e ora di Inizio Trasmissione</Label>
                      <Inline><DateField w={404} value="04/12/2020" /><Input $w={87}>14:32</Input></Inline>
                    </Field>
                    <Field>
                      <Label>Data e ora di Fine Trasmissione</Label>
                      <Inline $gap={11}><DateField w={402} value="04/12/2020" /><Input $w={87}>15:49</Input></Inline>
                    </Field>
                  </Cols>
                </Box>
              </LeftCol>
              <RightCol>
                <Box $h={604}>
                  <Legend $w={264} $fs={24.7}><Pin />Oggi 04/12/2020</Legend>
                  <ExpandBtn $r={14}><MoveDiagonal size={26} strokeWidth={1.25} /></ExpandBtn>
                  <TuscanyMap inland="#ffff1a" />
                </Box>
                <Box $h={604}>
                  <Legend $w={264} $fs={24.7}><Pin />Domani 05/12/2020</Legend>
                  <ExpandBtn $r={14}><MoveDiagonal size={26} strokeWidth={1.25} /></ExpandBtn>
                  <TuscanyMap inland="#ffa500" />
                </Box>
                <Tooltip>
                  <TipTitle>[ E1 ] » Etruria</TipTitle>
                  <TipTabs>
                    <TipTab $on>Province</TipTab>
                    <TipTab>Comuni</TipTab>
                  </TipTabs>
                  <TipBody>GROSSETO, LIVORNO, PISA, SIENA</TipBody>
                </Tooltip>
              </RightCol>
            </Upper>
            <TabsRow>
              <PanelTab $w={196} $on><TbClock size={24} strokeWidth={1.5} />Tempistiche</PanelTab>
              <PanelTab $w={223}><CloudSunRain size={27} strokeWidth={1.1} color="#777" />Meteo Lamma</PanelTab>
              <PanelTab $w={211}><Signal />Bollettino CFR</PanelTab>
            </TabsRow>
            <Panel>
              <Toolbar>
                <OutlineBtn $w={173}><TbSquarePlus size={24} strokeWidth={1.25} />AGGIUNGI</OutlineBtn>
                <OutlineBtn $w={243}><Mirror><Phone size={25} strokeWidth={1.2} /></Mirror>COMUNICAZIONI</OutlineBtn>
              </Toolbar>
              <TableArea>
                <TableClip>
                  <Table>
                    <thead>
                      <tr>
                        <Th $w={563}>Zone di Allerta</Th>
                        <Th $w={236}>Criticità</Th>
                        <Th $w={457}>Rischio</Th>
                        <Th $w={992}>Tempi</Th>
                      </tr>
                    </thead>
                    <tbody>
                      {rows.map(([zone, level, hydro, time], i) => (
                        <Tr key={i} $alt={i % 2 === 1}>
                          <Td>{zone}</Td>
                          <LevelCell $level={level}>{level}</LevelCell>
                          <Td>
                            <RiskWrap $gap={hydro ? 13 : 11}>
                              {hydro ? <Hydro size={25} /> : <TbDroplets size={23} color="#777" {...ICON} />}
                              {hydro ? 'Idraulico - Reticolo Principale' : 'Idrogeologico'}
                            </RiskWrap>
                          </Td>
                          <Td>{time}</Td>
                        </Tr>
                      ))}
                    </tbody>
                  </Table>
                </TableClip>
                <ScrollCol>
                  <ScrollHead />
                  <ScrollThumb />
                </ScrollCol>
              </TableArea>
            </Panel>
            <Actions>
              <ActionBtn><TbDeviceFloppy size={26} strokeWidth={1.5} />SALVA</ActionBtn>
              <ActionBtn><TbSquareCheck size={26} strokeWidth={1.5} />SALVA E CHIUDI</ActionBtn>
              <ActionBtn><SliderBox size={26} color="#fff" />OPERAZIONI<Caret><TbChevronDown size={20} strokeWidth={2.4} /></Caret></ActionBtn>
              <ActionBtn><TbX size={24} strokeWidth={2} />ANNULLA</ActionBtn>
              <ActionBtn><TbSquareX size={26} strokeWidth={1.5} />CHIUDI</ActionBtn>
            </Actions>
          </Content>
        </Main>
      </Page>
    </>
  );
}
